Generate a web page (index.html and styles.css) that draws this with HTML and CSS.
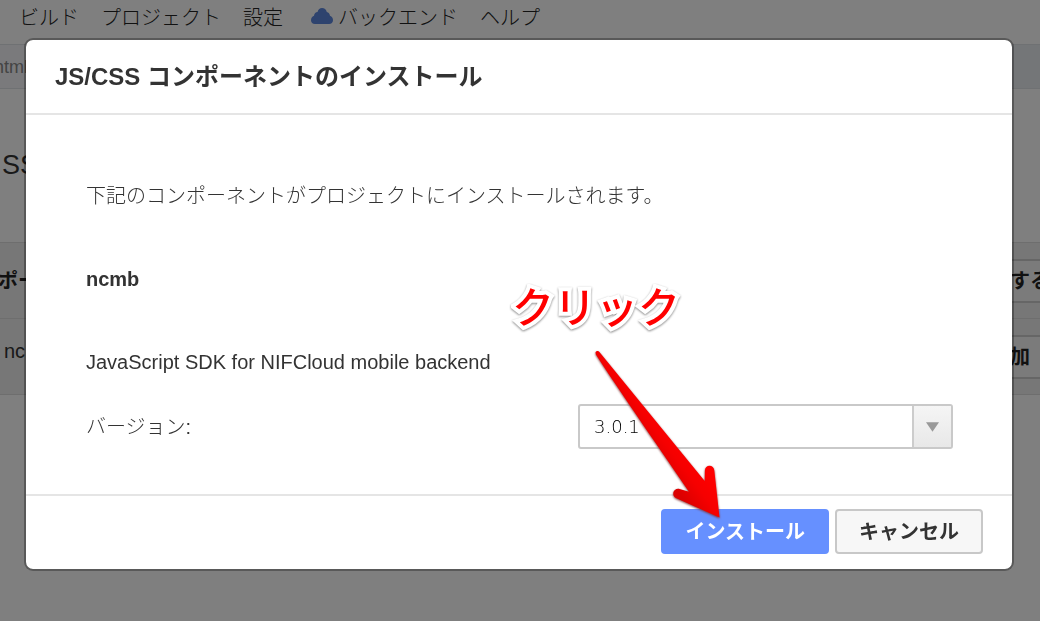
FILE: index.html
```html
<!DOCTYPE html>
<html lang="ja">
<head>
<meta charset="utf-8">
<title>JS/CSS コンポーネントのインストール</title>
<link rel="stylesheet" href="styles.css">
</head>
<body>
<div class="page">
  <nav class="menu">
    <a href="#">ビルド</a>
    <a href="#">プロジェクト</a>
    <a href="#">設定</a>
    <a href="#" class="menu-backend"><svg class="cloud" viewBox="0 0 22 18" aria-hidden="true"><path d="M4 17C1.500 17 0 15.500 0 13.200C0 11 1 9.500 3 8.800C3.200 6.500 4.800 5.200 6.500 5C7.200 2.200 8.800 1 11 1C13.400 1 15.200 2.400 15.800 5C17.600 5.400 18.800 6.800 19 8.800C21 9.500 22 11.100 22 13.200C22 15.500 20.500 17 18 17Z"/></svg>バックエンド</a>
    <a href="#">ヘルプ</a>
  </nav>
  <div class="tabs"><span class="tab">html</span></div>
  <h1 class="page-title">SS</h1>
  <div class="components">
    <div class="row"><strong class="row-head">ポー</strong><button class="row-button" type="button">する</button></div>
    <div class="row"><span class="row-name">nc</span><button class="row-button" type="button">加</button></div>
  </div>
</div>

<div class="overlay">
  <section class="modal" role="dialog" aria-modal="true" aria-labelledby="modal-title">
    <header class="modal-header"><h2 id="modal-title">JS/CSS コンポーネントのインストール</h2></header>
    <div class="modal-body">
      <p>下記のコンポーネントがプロジェクトにインストールされます。</p>
      <p><strong>ncmb</strong></p>
      <p>JavaScript SDK for NIFCloud mobile backend</p>
      <div class="field">
        <label for="version">バージョン:</label>
        <div class="select">
          <select id="version"><option>3.0.1</option></select>
          <span class="select-arrow"><svg viewBox="0 0 14 10" aria-hidden="true"><path d="M0 0H14L7 10Z"/></svg></span>
        </div>
      </div>
    </div>
    <footer class="modal-footer">
      <button class="button primary" type="button">インストール</button>
      <button class="button" type="button">キャンセル</button>
    </footer>
  </section>
</div>

<div class="callout">クリック</div>
<svg class="pointer" viewBox="0 0 130 172" aria-hidden="true">
  <defs>
    <linearGradient id="red" gradientUnits="userSpaceOnUse" x1="72" y1="120" x2="102" y2="98">
      <stop offset="0" stop-color="#dc0000"/><stop offset="0.500" stop-color="#f60000"/><stop offset="1" stop-color="#ff0000"/>
    </linearGradient>
  </defs>
  <path fill="url(#red)" d="M5.500 2.200C6.800 .200 8.600 .800 9.400 2L114.700 131L114.900 120.500C115 114 124 114 124.300 120.500L129.500 167.500L86.500 148.300C80.500 145.500 83.500 137.500 89.500 138.900L99 141.700C77 109 30 42 5.800 4.200Z"/>
</svg>
</body>
</html>
```
FILE: styles.css
```css
* {
  box-sizing: border-box;
}

body {
  margin: 0;
  min-height: 100vh;
  background: #fff;
  color: #333;
  font-family: "Liberation Sans", "Noto Sans CJK JP", sans-serif;
  font-size: 20px;
  font-weight: 300;
  line-height: 24px;
  overflow: hidden;
}

h1,
h2,
p {
  margin: 0;
}

strong {
  font-weight: 700;
}

button,
select {
  font: inherit;
  color: inherit;
}

.menu {
  display: flex;
  gap: 22px;
  height: 44px;
  padding: 6px 19px;
}

.menu a {
  color: #222;
  text-decoration: none;
}

.menu-backend {
  display: flex;
  gap: 5px;
  padding-left: 6px;
}

.cloud {
  width: 22px;
  height: 18px;
  margin-top: 1px;
  fill: #5c86dc;
}

.tabs {
  display: flex;
  height: 45px;
  background: #e8ecf0;
  border-top: 1px solid #dfe2e6;
  border-bottom: 1px solid #dfe2e6;
}

.tab {
  width: 80px;
  margin-left: -6px;
  padding-top: 10px;
  background: #f4f5f8;
  color: #888;
  font-size: 18px;
}

.page-title {
  height: 153px;
  padding: 64px 2px 0;
  font-size: 27px;
  font-weight: 400;
}

.row {
  display: flex;
  align-items: center;
  justify-content: space-between;
  height: 76px;
  background: #eee;
  border-top: 1px solid #ddd;
}

.row:last-child {
  height: 77px;
  border-bottom: 1px solid #ddd;
}

.row-head {
  margin-left: -2px;
  color: #222;
}

.row-name {
  padding: 0 0 12px 4px;
}

.row-button {
  width: 60px;
  height: 44px;
  margin-right: -28px;
  padding: 0;
  background: #f6f6f6;
  border: 2px solid #ccc;
  color: #222;
  font-weight: 700;
  text-align: left;
  white-space: nowrap;
}

.overlay {
  position: fixed;
  inset: 0;
  padding: 38px 26px 0 24px;
  background: rgba(0, 0, 0, 0.5);
}

.modal {
  background: #fff;
  background-clip: padding-box;
  border: 2px solid rgba(0, 0, 0, 0.3);
  border-radius: 9px;
}

.modal-header {
  padding: 23px 29px 22px;
  border-bottom: 2px solid #e5e5e5;
}

.modal-header h2 {
  font-size: 24px;
  line-height: 28px;
}

.modal-body {
  display: grid;
  gap: 59px;
  padding: 69px 59px 45px 60px;
}

.field {
  display: flex;
  justify-content: space-between;
  align-items: center;
  margin-top: -29px;
}

.select {
  position: relative;
  width: 375px;
}

.select select {
  display: block;
  width: 100%;
  height: 45px;
  padding: 0 50px 0 14px;
  appearance: none;
  background: #fff;
  border: 2px solid #c9c9c9;
  border-radius: 3px;
  color: #000;
  font-family: "DejaVu Sans", sans-serif;
  font-size: 18px;
}

.select-arrow {
  position: absolute;
  top: 2px;
  right: 2px;
  bottom: 2px;
  display: grid;
  place-items: center;
  width: 39px;
  background: linear-gradient(#f5f5f5, #e8e8e8);
  border-left: 2px solid #ccc;
  pointer-events: none;
}

.select-arrow svg {
  width: 13px;
  height: 10px;
  fill: #999;
}

.modal-footer {
  display: flex;
  justify-content: flex-end;
  gap: 6px;
  padding: 13px 29px 15px;
  border-top: 2px solid #e5e5e5;
}

.button {
  height: 45px;
  padding: 0 22px;
  background: #f7f7f7;
  border: 2px solid #c8c8c8;
  border-radius: 4px;
  font-weight: 700;
}

.button.primary {
  background: #6690ff;
  border-color: #6690ff;
  color: #fff;
}

.callout {
  position: absolute;
  top: 287px;
  left: 512px;
  color: #f00;
  font-size: 42px;
  font-weight: 500;
  line-height: 44px;
  -webkit-text-stroke: 8px #fff;
  paint-order: stroke fill;
  filter: drop-shadow(0 1px 1px #888);
}

.pointer {
  position: absolute;
  top: 350px;
  left: 590px;
  width: 130px;
  height: 172px;
  filter: drop-shadow(0 1px 1px #833);
}
```
